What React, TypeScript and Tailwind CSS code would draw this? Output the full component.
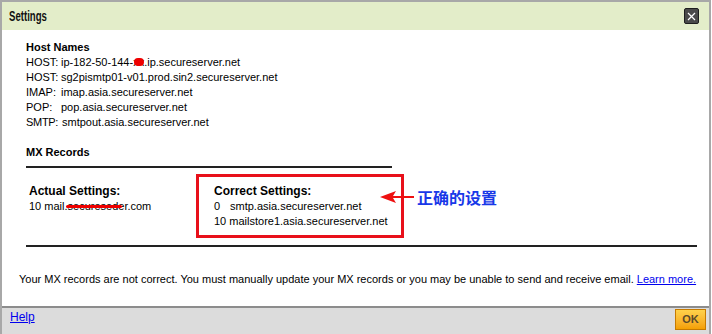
export default function App() {
  const font = { fontFamily: "'Liberation Sans', Arial, sans-serif" };
  return (
    <div className="w-[712px] h-[334px] bg-white overflow-hidden" style={font}>
      <div className="w-[711px] h-[334px] border-l-2 border-r-2 border-t-2 border-[#a8a8a8] flex flex-col">
        {/* title bar */}
        <div className="h-[28px] bg-[#e3edc9] flex items-center justify-between pl-[7px] pr-[10px] shrink-0">
          <span className="inline-block text-[15px] font-bold text-[#111] origin-left scale-x-[0.64]">Settings</span>
          <button className="w-[15px] h-[16px] bg-[#4a4a4a] border border-[#1e1e1e] rounded-[2px] flex items-center justify-center">
            <svg width="9" height="9" viewBox="0 0 9 9">
              <path d="M1 1L8 8M8 1L1 8" stroke="white" strokeWidth="1.2" />
            </svg>
          </button>
        </div>

        {/* body */}
        <div className="flex-1 pl-[24px] pr-[12px] pt-[10px] text-[11px] leading-[15px] text-black">
          <div className="font-bold">Host Names</div>
          <div className="flex">
            <span className="w-[35px]">HOST:</span>
            <span>
              ip-182-50-144-
              <span className="relative inline-block">
                <span>xx</span>
                <span className="absolute left-[1px] top-[3px] w-[10px] h-[8px] rounded-full bg-[#ee0000]" />
              </span>
              .ip.secureserver.net
            </span>
          </div>
          <div className="flex">
            <span className="w-[35px]">HOST:</span>
            <span>sg2pismtp01-v01.prod.sin2.secureserver.net</span>
          </div>
          <div className="flex">
            <span className="w-[35px]">IMAP:</span>
            <span>imap.asia.secureserver.net</span>
          </div>
          <div className="flex">
            <span className="w-[35px]">POP:</span>
            <span>pop.asia.secureserver.net</span>
          </div>
          <div className="flex">
            <span className="w-[35px] tracking-[-0.3px]">SMTP:</span>
            <span className="ml-[1px]">smtpout.asia.secureserver.net</span>
          </div>

          <div className="font-bold mt-[15px]">MX Records</div>
          <div className="w-[366px] h-[2px] bg-[#222] mt-[6px]" />

          <div className="flex items-start mt-[6px]">
            <div className="ml-[3px] w-[167px] pt-[10px]">
              <div className="font-bold text-[12px] leading-[15px]">Actual Settings:</div>
              <div className="relative">
                10 mail.secureseder.com
                <span className="absolute left-[37px] top-[6px] w-[56px] h-[3px] rounded-full bg-[#ee0000]" />
              </div>
            </div>
            <div className="w-[208px] h-[64px] border-[3px] border-[#e8101a] pl-[15px] pt-[7px]">
              <div className="font-bold text-[12px] leading-[15px]">Correct Settings:</div>
              <div className="flex">
                <span className="w-[16px]">0</span>
                <span>smtp.asia.secureserver.net</span>
              </div>
              <div>10 mailstore1.asia.secureserver.net</div>
            </div>
            <div className="flex items-center mt-[14px] -ml-[24px]">
              <svg width="36" height="14" viewBox="0 0 36 14">
                <path d="M0 7L16 1L13 6H34V8H13L16 13Z" fill="#ee1010" />
              </svg>
              <span
                className="ml-[1px] text-[16px] leading-[18px] font-bold text-[#1838e8]"
                style={{ fontFamily: "'Noto Sans CJK SC', sans-serif" }}
              >
                正确的设置
              </span>
            </div>
          </div>

          <div className="w-[671px] h-[2px] bg-[#222] mt-[7px]" />

          <div className="mt-[25px] -ml-[7px]">
            Your MX records are not correct. You must manually update your MX records or you may be unable to send and receive email.{" "}
            <a href="#" className="text-[#0000ee] underline">Learn more.</a>
          </div>
        </div>

        {/* footer */}
        <div className="h-[28px] bg-[#dcdcdc] border-t-2 border-[#8c8c8c] flex items-start justify-between pl-[8px] pr-[3px] shrink-0">
          <a href="#" className="text-[12px] leading-[15px] text-[#0000ee] underline mt-[2px]">Help</a>
          <button className="w-[31px] h-[21px] mt-[1px] border border-[#c67a00] bg-gradient-to-b from-[#ffd24a] to-[#f4a000] text-[11px] font-bold text-[#5a4a2a] flex items-center justify-center">
            OK
          </button>
        </div>
      </div>
    </div>
  );
}
